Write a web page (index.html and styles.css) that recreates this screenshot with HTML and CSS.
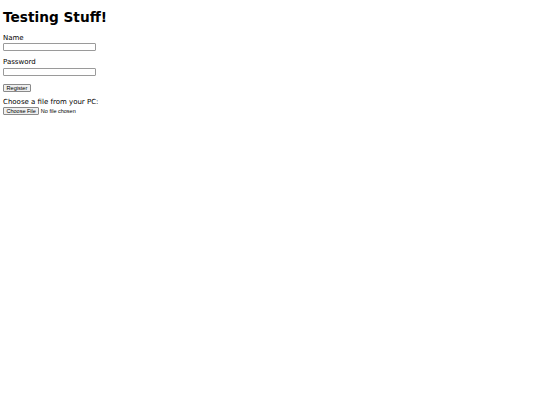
FILE: index.html
```html
<!DOCTYPE html>
<html>
<head>
<meta charset="utf-8">
<title>Testing Stuff!</title>
<link rel="stylesheet" href="styles.css">
</head>
<body>
<h1 class="title">Testing Stuff!</h1>
<form class="form">
  <div class="field">
    <label class="label" for="name">Name</label>
    <input class="text" id="name" type="text">
  </div>
  <div class="field">
    <label class="label" for="pw">Password</label>
    <input class="text" id="pw" type="password">
  </div>
  <div class="actions">
    <button class="btn" type="button">Register</button>
  </div>
  <div class="field">
    <label class="label" for="file">Choose a file from your PC:</label>
    <input class="file" id="file" type="file">
  </div>
</form>
</body>
</html>
```
FILE: styles.css
```css
html, body {
  background: #fff;
}
body {
  margin: 0;
  padding: 0 3px;
  font-family: "DejaVu Sans", sans-serif;
  font-size: 7px;
  line-height: 7.8px;
  color: #000;
}
.title {
  font-size: 13.7px;
  line-height: 15.6px;
  margin: 10px 0 9px;
  font-weight: bold;
}
.form {
  display: flex;
  flex-direction: column;
  align-items: flex-start;
}
.field {
  display: flex;
  flex-direction: column;
  align-items: flex-start;
  margin-bottom: 7.5px;
}
.label {
  display: block;
}
.text {
  box-sizing: border-box;
  width: 93px;
  height: 8px;
  margin: 1px 0 0;
  padding: 0;
  border: 1px solid #9a9a9a;
  border-radius: 1px;
  background: #fff;
  font-size: 5.6px;
}
.actions {
  margin: 1px 0 6px;
}
.btn {
  box-sizing: border-box;
  height: 8px;
  margin: 0;
  padding: 0 2.5px;
  font-family: "Liberation Sans", Arial, sans-serif;
  font-size: 5.6px;
  line-height: 6.5px;
  color: #000;
  background: #efefef;
  border: 1px solid #8a8a8a;
  border-radius: 1px;
}
.file {
  margin: 0.7px 0 0;
  font-family: "Liberation Sans", Arial, sans-serif;
  font-size: 5.5px;
  color: #000;
}
.file::file-selector-button {
  box-sizing: border-box;
  height: 8px;
  margin: 0 1.5px 0 0;
  padding: 0 2.5px;
  font-family: "Liberation Sans", Arial, sans-serif;
  font-size: 5.5px;
  color: #000;
  background: #efefef;
  border: 1px solid #8a8a8a;
  border-radius: 1px;
}
```
